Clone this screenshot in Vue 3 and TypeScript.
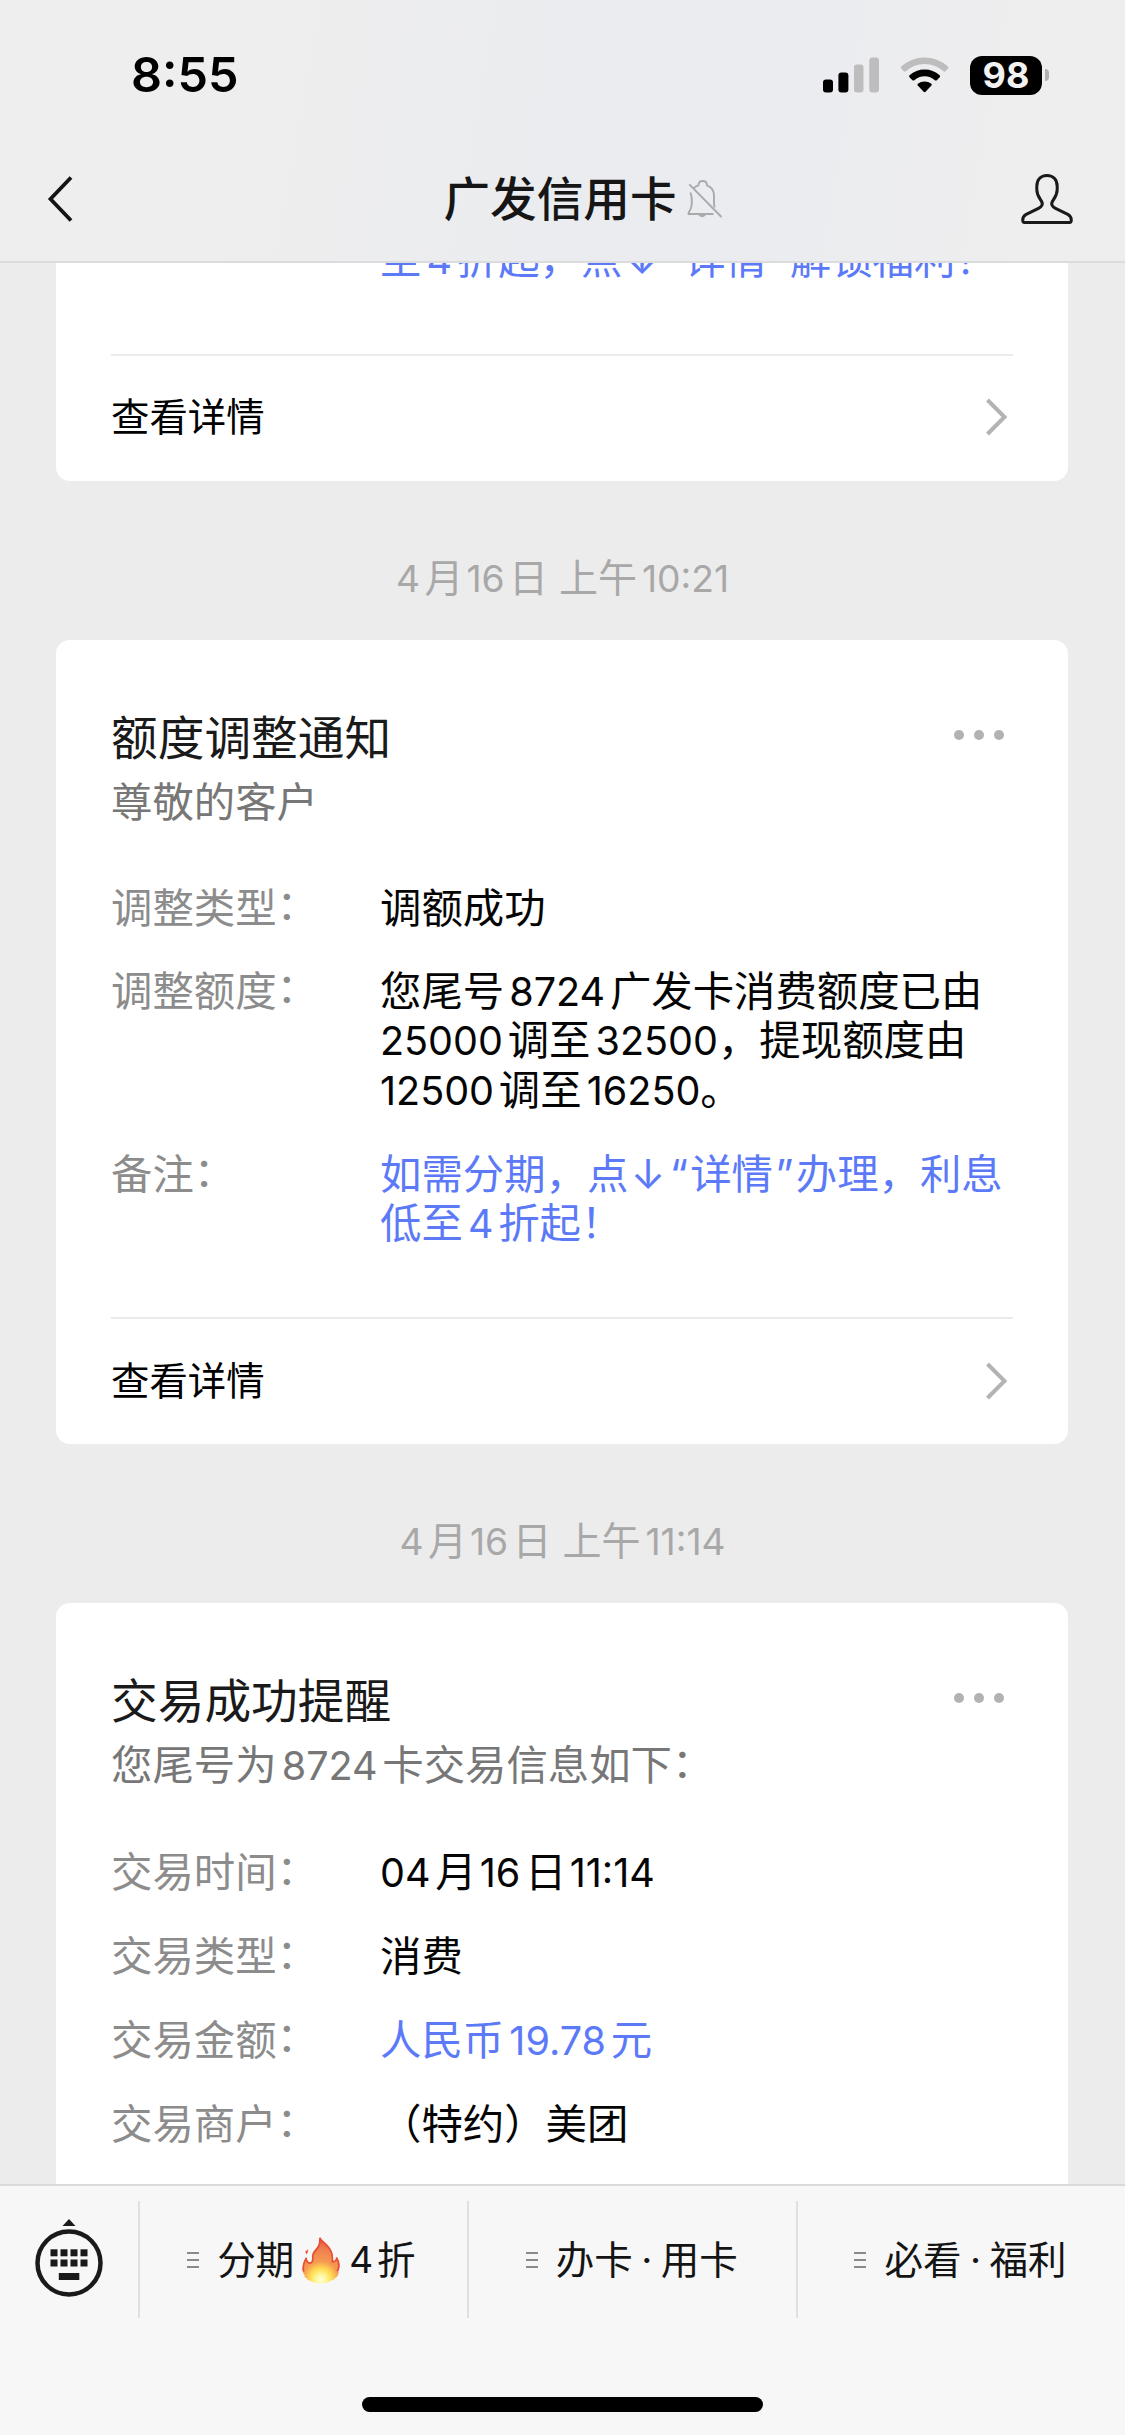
<script setup lang="ts">
import { h, type FunctionalComponent } from 'vue'

interface Row {
  label: string
  lines: string[]
  accent?: boolean
}

interface Message {
  time: string
  title: string
  subtitle: string
  rows: Row[]
  hasDetail: boolean
}

const messages: Message[] = [
  {
    time: '4月16日 上午10:21',
    title: '额度调整通知',
    subtitle: '尊敬的客户',
    rows: [
      { label: '调整类型：', lines: ['调额成功'] },
      {
        label: '调整额度：',
        lines: ['您尾号8724广发卡消费额度已由', '25000调至32500，提现额度由', '12500调至16250。'],
      },
      { label: '备注：', lines: ['如需分期，点↓“详情”办理，利息', '低至4折起！'], accent: true },
    ],
    hasDetail: true,
  },
  {
    time: '4月16日 上午11:14',
    title: '交易成功提醒',
    subtitle: '您尾号为8724卡交易信息如下：',
    rows: [
      { label: '交易时间：', lines: ['04月16日11:14'] },
      { label: '交易类型：', lines: ['消费'] },
      { label: '交易金额：', lines: ['人民币19.78元'], accent: true },
      { label: '交易商户：', lines: ['（特约）美团'] },
    ],
    hasDetail: false,
  },
]

// Splits mixed text so that Latin runs get a little air next to Chinese characters,
// and full-width colons, quotes and arrows can be nudged on their own.
const Mixed: FunctionalComponent<{ text: string }> = (props) => {
  const parts = props.text.split(/([\u0021-\u007e]+|[：↓“”])/).filter((p) => p !== '')
  return h(
    'span',
    parts.map((p, i) => {
      const latin = /^[\u0021-\u007e]/.test(p)
      const prev = parts[i - 1] ?? ''
      const next = parts[i + 1] ?? ''
      const afterDateUnit = /[月日]$/.test(prev)
      return h(
        'span',
        {
          class: {
            latin,
            colon: p === '：',
            mark: /^[↓“”]/.test(p),
            'gap-before': latin && prev !== '' && !afterDateUnit,
            'gap-date': latin && afterDateUnit,
            'gap-after': latin && next !== '' && !/^[，。]/.test(next),
          },
        },
        p,
      )
    }),
  )
}
Mixed.props = ['text']
</script>

<template>
  <div class="screen">
    <header class="top">
      <div class="status">
        <span class="clock">8:55</span>
        <div class="indicators">
          <svg class="signal" width="56" height="36" viewBox="0 0 56 36">
            <rect x="0" y="22.5" width="10" height="13" rx="3" fill="#000" />
            <rect x="15.4" y="15.5" width="10" height="20" rx="3" fill="#000" />
            <rect x="31" y="7.5" width="9.5" height="28" rx="3" fill="#bdbdbe" />
            <rect x="46.3" y="0.5" width="9.7" height="35" rx="3" fill="#bdbdbe" />
          </svg>
          <svg class="wifi" width="50" height="36" viewBox="0 0 50 36">
            <path d="M1.2 9.6 Q11.5 .5 24.6 .5 Q37.7 .5 48 9.6 Q48.9 10.6 48 11.6 L45.4 14.3 Q44.5 15.1 43.5 14.3 Q35 7 24.6 7 Q14.2 7 5.7 14.3 Q4.7 15.1 3.8 14.3 L1.2 11.6 Q.3 10.6 1.2 9.6 Z" fill="#bdbdbe" />
            <path d="M9.5 18.2 Q16 12.5 24.6 12.5 Q33.2 12.5 39.7 18.2 Q40.6 19.2 39.7 20.2 L36.8 23.2 Q35.8 24 34.8 23.2 Q30.5 19.3 24.6 19.3 Q18.7 19.3 14.4 23.2 Q13.4 24 12.4 23.2 L9.5 20.2 Q8.6 19.2 9.5 18.2 Z" fill="#000" />
            <path d="M17.8 26.8 Q20.8 24.5 24.6 24.5 Q28.4 24.5 31.4 26.8 Q32.2 27.7 31.4 28.6 L25.8 34.6 Q24.6 35.7 23.4 34.6 L17.8 28.6 Q17 27.7 17.8 26.8 Z" fill="#000" />
          </svg>
          <div class="battery"><span>98</span></div>
          <i class="nub"></i>
        </div>
      </div>
      <div class="nav">
        <svg class="back" width="30" height="50" viewBox="0 0 30 50" fill="none" stroke="#141414" stroke-width="3.8">
          <path d="M27 3.5 L6.5 25 L27 46.5" />
        </svg>
        <h1 class="name">
          广发信用卡
          <svg class="bell" width="38" height="40" viewBox="0 0 38 40" fill="none" stroke="#aaaaad" stroke-width="1.9">
            <path d="M4.5 13.5 Q6.3 19 5.8 25 Q5.4 29.5 3.3 32.5 Q2.3 34.2 2.5 35 H27.5" />
            <path d="M7.6 9.5 Q9.6 7.3 12.4 6.4 Q12.6 2 16.7 2 Q20.8 2 21 6.4 Q28 9 28 17 V23.5 Q28 26.5 28.6 28.5" />
            <path d="M3.3 5.3 L35.5 38" />
            <path d="M13.3 35.5 Q16.5 39 19.3 35.5 Z" fill="#aaaaad" />
          </svg>
        </h1>
        <svg class="person" width="54" height="54" viewBox="0 0 54 54" fill="none" stroke="#1a1a1a" stroke-width="3" stroke-linejoin="round">
          <path d="M27 3.5 C20.5 3.5 16.8 8 16.8 14.5 V17.5 C16.8 22 18.5 25 20.7 28 C23.8 32.2 22 34.5 18.5 36.3 L6.2 42.3 C3.5 43.7 2.7 45.5 2.7 48 Q2.7 50.5 4.5 50.5 H49.5 Q51.3 50.5 51.3 48 C51.3 45.5 50.5 43.7 47.8 42.3 L35.5 36.3 C32 34.5 30.2 32.2 33.3 28 C35.5 25 37.2 22 37.2 17.5 V14.5 C37.2 8 33.5 3.5 27 3.5 Z" />
        </svg>
      </div>
    </header>

    <main class="chat">
      <section class="card clipped">
        <div class="row accent">
          <div class="value"><p><Mixed text="至4折起，点↓“详情”解锁福利！" /></p></div>
        </div>
        <div class="detail">
          <span>查看详情</span>
          <svg width="24" height="40" viewBox="0 0 24 40" fill="none" stroke="#b3b3b3" stroke-width="4"><path d="M2.5 3 L19.5 20 L2.5 37" /></svg>
        </div>
      </section>

      <template v-for="m in messages" :key="m.time">
        <div class="time"><Mixed :text="m.time" /></div>
        <section class="card">
          <div class="head">
            <h2>{{ m.title }}</h2>
            <div class="more"><i></i><i></i><i></i></div>
          </div>
          <p class="sub"><Mixed :text="m.subtitle" /></p>
          <div class="rows">
            <div v-for="r in m.rows" :key="r.label" class="row" :class="{ accent: r.accent }">
              <div class="label"><Mixed :text="r.label" /></div>
              <div class="value">
                <p v-for="line in r.lines" :key="line"><Mixed :text="line" /></p>
              </div>
            </div>
          </div>
          <div v-if="m.hasDetail" class="detail">
            <span>查看详情</span>
            <svg width="24" height="40" viewBox="0 0 24 40" fill="none" stroke="#b3b3b3" stroke-width="4"><path d="M2.5 3 L19.5 20 L2.5 37" /></svg>
          </div>
        </section>
      </template>
    </main>

    <footer class="bottom">
      <div class="menu">
        <div class="keyboard">
          <svg width="70" height="80" viewBox="0 0 70 80">
            <path d="M28.5 8 L35 1 L41.5 8 Z" fill="#1a1a1a" />
            <circle cx="35" cy="45" r="31.5" fill="none" stroke="#1a1a1a" stroke-width="4.5" />
            <g fill="#1a1a1a">
              <rect x="16.5" y="31.3" width="7" height="7" />
              <rect x="26.5" y="31.3" width="7" height="7" />
              <rect x="36.5" y="31.3" width="7" height="7" />
              <rect x="46.5" y="31.3" width="7" height="7" />
              <rect x="16.5" y="41.5" width="7" height="7" />
              <rect x="26.5" y="41.5" width="7" height="7" />
              <rect x="36.5" y="41.5" width="7" height="7" />
              <rect x="46.5" y="41.5" width="7" height="7" />
              <rect x="24.8" y="55" width="20.5" height="7" />
            </g>
          </svg>
        </div>
        <div class="tab first">
          <span class="bars"><i></i><i></i><i></i></span>
          <span>分期</span>
          <svg class="fire" width="38" height="48" viewBox="37 53 113 142">
            <defs>
              <radialGradient id="flame" gradientUnits="userSpaceOnUse" cx="93" cy="182" r="122">
                <stop offset="0" stop-color="#fffde0" />
                <stop offset=".12" stop-color="#fff79a" />
                <stop offset=".27" stop-color="#ffdb52" />
                <stop offset=".44" stop-color="#f69a52" />
                <stop offset=".75" stop-color="#ee7f4e" />
                <stop offset="1" stop-color="#e8503a" />
              </radialGradient>
            </defs>
            <path d="M90 55 C92 64 103 69 115 82 C129 98 131 112 129 128 C136 127 141 120 140 114 C149 126 151 145 144 160 C148 161 147 164 143 168 C146 169 140 176 134 178 C137 182 125 184 119 188 C105 195 78 195 66 188 C58 185 49 182 51 178 C42 174 43 170 46 170 C39 164 37 148 40 138 C42 128 46 124 49 115 C51 126 56 132 62 131 C69 130 67 119 67 112 C68 99 77 93 83 84 C89 75 91 65 90 55 Z" fill="url(#flame)" />
            <path d="M90 58 C92 66 103 71 114 84 C127 99 129 112 127 130 C136 129 140 122 140 118 C147 130 149 145 142 158 M42 158 C39 148 42 132 49 119 C51 130 56 134 62 133 C71 131 69 119 69 112 C70 101 79 95 85 86 C90 77 91 67 90 58" fill="none" stroke="#e84e36" stroke-width="5" stroke-linejoin="round" />
            <path d="M56 91 C54 97 56 100 51 107 Q46 103 47 98 Q51 97 56 91 Z" fill="#ea5a40" />
          </svg>
          <span class="four">4</span>
          <span>折</span>
        </div>
        <div class="tab">
          <span class="bars"><i></i><i></i><i></i></span>
          <span>办卡</span><span class="dot">·</span><span>用卡</span>
        </div>
        <div class="tab">
          <span class="bars"><i></i><i></i><i></i></span>
          <span>必看</span><span class="dot">·</span><span>福利</span>
        </div>
      </div>
      <div class="home"></div>
    </footer>
  </div>
</template>

<style>
body {
  margin: 0;
  background: #ececec;
}
.latin {
  font-size: 0.955em;
}
.gap-before {
  margin-left: 0.13em;
}
.gap-date {
  margin-left: 0.08em;
}
.gap-after {
  margin-right: 0.12em;
}
.colon {
  position: relative;
  top: -0.06em;
}
.mark {
  margin: 0 0.055em;
}
</style>

<style scoped>
.screen {
  width: 1125px;
  height: 2435px;
  display: flex;
  flex-direction: column;
  overflow: hidden;
  background: #ececec;
  font-family: Inter, 'Noto Sans CJK SC', sans-serif;
  color: #000;
}
h1,
h2,
p {
  margin: 0;
  font-weight: 400;
}

.top {
  box-sizing: border-box;
  height: 263px;
  flex: none;
  border-bottom: 2px solid #dcdcde;
  background: linear-gradient(100deg, #eeeeee 20%, #ebecef 50%, #ebecf0 68%, #eeeeee 92%);
}
.status {
  height: 150px;
  display: flex;
  align-items: center;
  justify-content: space-between;
  padding: 0 76px 0 131px;
}
.clock {
  font-size: 48.5px;
  font-weight: 600;
  line-height: 60px;
}
.indicators {
  display: flex;
  align-items: center;
}
.wifi {
  margin-left: 21px;
}
.battery {
  margin-left: 20px;
  width: 72px;
  height: 39px;
  border-radius: 12px;
  background: #000;
  color: #f2f2f2;
  font-size: 36px;
  font-weight: 700;
  line-height: 39px;
  text-align: center;
}
.nub {
  margin-left: 3px;
  width: 4px;
  height: 12px;
  border-radius: 0 5px 5px 0;
  background: #b0b0b1;
}
.nav {
  height: 98px;
  display: grid;
  grid-template-columns: 1fr auto 1fr;
  align-items: center;
  padding: 0 51px 0 44px;
}
.name {
  position: relative;
  left: 1px;
  font-size: 46.6px;
  font-weight: 500;
  line-height: 60px;
  color: #161616;
}
.bell {
  position: absolute;
  left: 100%;
  top: 10px;
  margin-left: 10px;
}
.person {
  justify-self: end;
}

.chat {
  flex: none;
  height: 1921px;
  overflow: hidden;
  padding: 0 56px;
}
.card {
  box-sizing: border-box;
  width: 1012px;
  padding: 68px 55px 0;
  border-radius: 14px;
  background: #fff;
}
.card:last-child {
  padding-bottom: 100px;
}
.clipped {
  padding-top: 0;
  border-radius: 0 0 14px 14px;
  overflow: hidden;
}
.clipped .row {
  margin-top: -28px;
  padding-left: 269px;
}
.time {
  height: 159px;
  box-sizing: border-box;
  padding-top: 67px;
  text-align: center;
  font-size: 39px;
  line-height: 60px;
  color: #a8a8a8;
}
.head {
  display: flex;
  justify-content: space-between;
}
h2 {
  font-size: 46.7px;
  line-height: 60px;
  color: #1a1a1a;
}
.more {
  display: flex;
  gap: 10px;
  padding: 22px 9px 0 0;
}
.more i {
  width: 10px;
  height: 10px;
  border-radius: 50%;
  background: #b2b2b2;
}
.sub {
  margin-top: 9px;
  font-size: 41.4px;
  line-height: 50px;
  color: #777;
}
.rows {
  margin-top: 57px;
  display: flex;
  flex-direction: column;
  gap: 34.8px;
}
.row {
  display: flex;
  font-size: 41.4px;
  line-height: 48.5px;
}
.label {
  width: 269px;
  flex: none;
  color: #8c8c8c;
}
.value {
  white-space: nowrap;
  color: #050505;
}
.accent .value {
  color: #5c7af8;
}
.detail {
  box-sizing: border-box;
  height: 127px;
  margin-top: 69px;
  padding: 0 4px 2px 0;
  border-top: 2px solid #ebebeb;
  display: flex;
  align-items: center;
  justify-content: space-between;
  font-size: 38.4px;
  line-height: 50px;
}

.bottom {
  flex: 1;
  border-top: 2px solid #dadada;
  background: #f7f7f7;
  display: flex;
  flex-direction: column;
  align-items: center;
}
.menu {
  width: 100%;
  height: 117px;
  margin-top: 15px;
  display: flex;
}
.keyboard {
  box-sizing: border-box;
  width: 138px;
  padding: 17px 0 0 34px;
}
.tab {
  box-sizing: border-box;
  width: 328.8px;
  display: flex;
  align-items: center;
  justify-content: center;
  padding-right: 1px;
  border-left: 2px solid #e0e0e0;
  font-size: 38.5px;
  line-height: 50px;
  color: #141414;
}
.tab.first {
  padding-right: 4px;
}
.bars {
  width: 12px;
  margin-right: 18px;
  display: flex;
  flex-direction: column;
  gap: 5px;
}
.bars i {
  height: 2px;
  background: #8a8a8a;
}
.dot {
  width: 28px;
  text-align: center;
}
.fire {
  margin-left: 8px;
}
.four {
  margin: 0 4px 0 9px;
  font-size: 37px;
}
.home {
  width: 401px;
  height: 15px;
  margin-top: 79px;
  border-radius: 8px;
  background: #000;
}
</style>
